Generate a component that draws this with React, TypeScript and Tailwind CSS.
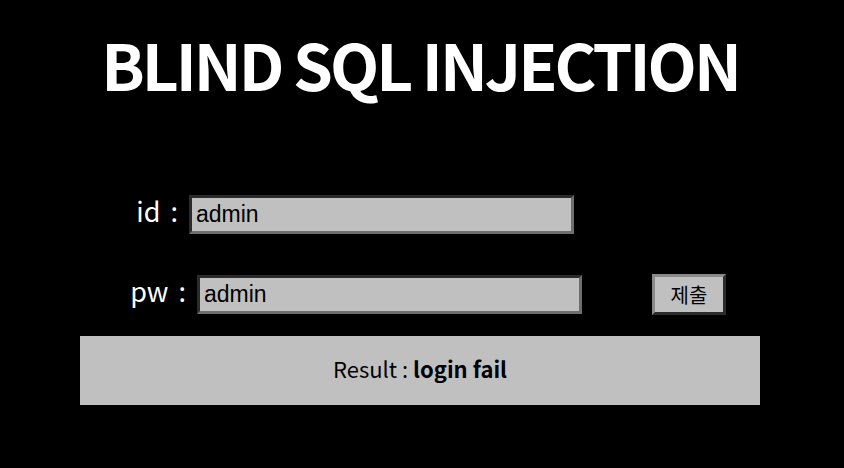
import React from 'react';

const cjk = { fontFamily: '"Noto Sans CJK KR", "Noto Sans", sans-serif' };
const arial = { fontFamily: '"Liberation Sans", Arial, sans-serif' };

export default function App() {
  return (
    <div className="min-h-[468px] w-[844px] bg-black text-white" style={cjk}>
      <h1 className="pt-[31px] pr-[4px] text-center text-[64px] font-bold leading-[64px] tracking-[-3px]">
        BLIND SQL INJECTION
      </h1>

      <form className="mt-[100px] flex flex-col" onSubmit={(e) => e.preventDefault()}>
        <div className="flex h-[39px] items-center">
          <label className="mb-[9px] w-[189px] pr-[11px] text-right text-[27px] leading-none [word-spacing:4px]">id :</label>
          <input
            defaultValue="admin"
            className="h-[39px] w-[385px] border-[3px] border-t-[#2b2b2b] border-l-[#2b2b2b] border-b-[#6e6e6e] border-r-[#6e6e6e] bg-[#c0c0c0] pl-[4px] text-[23px] text-black outline-none"
            style={arial}
          />
        </div>

        <div className="mt-[40px] flex h-[41px] items-center">
          <label className="mb-[9px] w-[197px] pr-[11px] text-right text-[27px] leading-none [word-spacing:4px]">pw :</label>
          <input
            defaultValue="admin"
            className="h-[39px] w-[385px] border-[3px] border-t-[#2b2b2b] border-l-[#2b2b2b] border-b-[#6e6e6e] border-r-[#6e6e6e] bg-[#c0c0c0] pl-[4px] text-[23px] text-black outline-none"
            style={arial}
          />
          <button
            type="submit"
            className="ml-[70px] h-[41px] w-[74px] border-[3px] border-t-[#8a8a8a] border-l-[#8a8a8a] border-b-[#2b2b2b] border-r-[#2b2b2b] bg-[#c0c0c0] text-[20px] leading-none text-black"
          >
            제출
          </button>
        </div>
      </form>

      <div className="ml-[80px] mt-[21px] flex h-[69px] w-[680px] items-center justify-center bg-[#c0c0c0] pb-[4px] text-[22px] text-black">
        Result :&nbsp;<b>login fail</b>
      </div>
    </div>
  );
}
